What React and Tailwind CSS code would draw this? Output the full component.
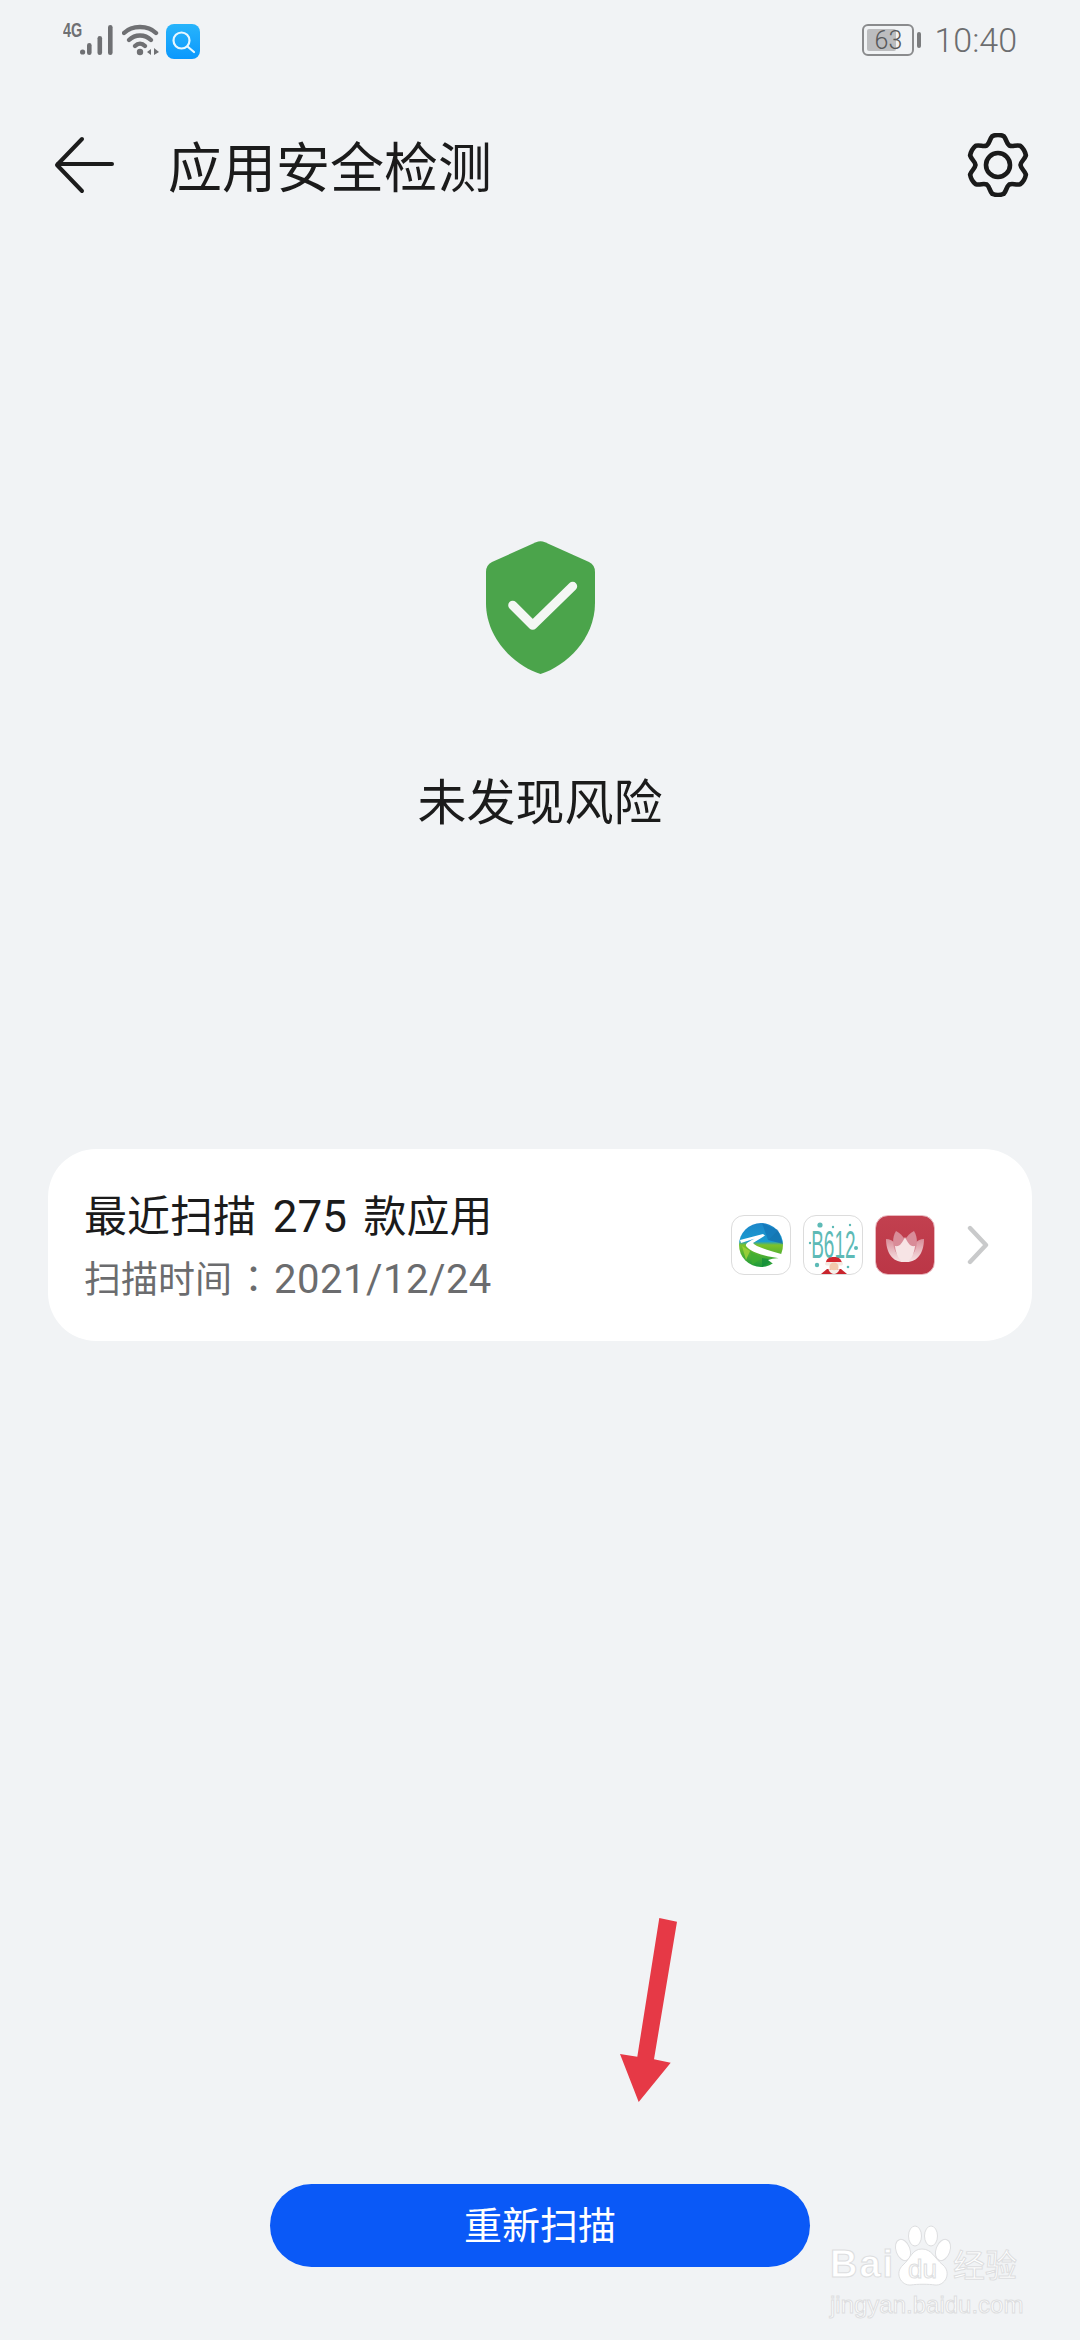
import React from 'react';

const FONT = 'font-["Roboto","Noto_Sans_CJK_SC",sans-serif]';

// gear outline: 6 teeth with smooth valleys
const gearPath = (() => {
  const R = 29.5;
  const r = 22.5;
  const pt = (rad, deg) => {
    const a = (deg * Math.PI) / 180;
    return `${(32 + rad * Math.cos(a)).toFixed(2)} ${(32 + rad * Math.sin(a)).toFixed(2)}`;
  };
  let d = '';
  for (let i = 0; i < 6; i++) {
    const a = -90 + i * 60;
    d += `${i === 0 ? 'M' : 'L'}${pt(R, a - 11)} Q${pt(R + 1.5, a)} ${pt(R, a + 11)} `;
    d += `C${pt(R - 3, a + 20)} ${pt(r + 1, a + 20)} ${pt(r, a + 30)} C${pt(r + 1, a + 40)} ${pt(R - 3, a + 40)} ${pt(R, a + 49)} `;
  }
  return d + 'Z';
})();

const SignalIcon = () => (
  <svg width="34" height="32" viewBox="0 0 34 32" className="shrink-0">
    <circle cx="2.6" cy="28" r="2.6" fill="#6f7073" />
    <rect x="7" y="19" width="4.6" height="12" rx="2.3" fill="#6f7073" />
    <rect x="17.5" y="12" width="4.6" height="19" rx="2.3" fill="#6f7073" />
    <rect x="28" y="1" width="4.6" height="30" rx="2.3" fill="#6f7073" />
  </svg>
);

const WifiIcon = () => (
  <svg width="38" height="32" viewBox="0 0 38 32" className="shrink-0">
    <g fill="none" stroke="#6f7073" strokeWidth="4.4" strokeLinecap="round">
      <path d="M2 9 C10 1 26 1 34 9" />
      <path d="M7 16 C13 10 23 10 29 16" />
      <path d="M13 22 C16 19 20 19 23 22" />
    </g>
    <circle cx="18" cy="28" r="3.2" fill="#6f7073" />
    <path d="M29 25 L25 28 L29 31 Z M32 24 L32 31 L37 28 Z" fill="#6f7073" />
  </svg>
);

const SearchAppIcon = () => (
  <div className="w-[34px] h-[35px] rounded-[8px] bg-gradient-to-b from-[#27b4fb] to-[#0a98fd] flex items-center justify-center shrink-0">
    <svg width="30" height="30" viewBox="0 0 30 30" fill="none" stroke="#e6f7ff" strokeWidth="2.2" strokeLinecap="round">
      <circle cx="13.5" cy="13.5" r="8" />
      <path d="M19.5 19.5 L26 25" />
    </svg>
  </div>
);

const RiverIcon = () => (
  <div className="w-[60px] h-[60px] rounded-[13px] bg-white border border-[#dcdcdc] overflow-hidden shrink-0">
    <svg width="58" height="58" viewBox="0 0 58 58">
      <defs>
        <linearGradient id="globeFill" x1="0" y1="0" x2="0" y2="1">
          <stop offset="0" stopColor="#1d86c9" />
          <stop offset="0.42" stopColor="#1a9cd0" />
          <stop offset="0.5" stopColor="#7cc22a" />
          <stop offset="1" stopColor="#1c9a3c" />
        </linearGradient>
      </defs>
      <circle cx="29" cy="29" r="22" fill="url(#globeFill)" />
      {/* low poly facets */}
      <path d="M30 7 L46 14 L36 24 Z" fill="#1273b5" opacity="0.7" />
      <path d="M36 24 L51 28 L46 14 Z" fill="#0f5f9e" opacity="0.55" />
      <path d="M18 35 L10 30 L14 44 Z" fill="#a5d33a" opacity="0.8" />
      <path d="M18 35 L30 42 L20 49 Z" fill="#3fae32" opacity="0.8" />
      <path d="M30 42 L42 44 L30 51 Z" fill="#0f8a3c" opacity="0.7" />
      {/* river */}
      <path d="M8 24 L31 18 L33 19.5 L21 27 C24 31 38 35 53 39 L53 43 C38 41 20 38 14 30 C13 27 20 24 23 22.5 L9 27 Z" fill="#fff" />
      <path d="M36 44 C42 42 48 42 54 42 L54 52 L44 50 Z" fill="#fff" />
    </svg>
  </div>
);

const B612Icon = () => (
  <div className="relative w-[60px] h-[60px] rounded-[13px] bg-white border border-[#dcdcdc] overflow-hidden shrink-0 flex items-center justify-center">
    <span className='font-["Liberation_Sans",sans-serif] text-[38px] leading-none text-[#5dbab6] scale-x-[0.5] whitespace-nowrap'>B612</span>
    <svg width="58" height="58" viewBox="0 0 58 58" className="absolute left-0 top-0">
      <g fill="#5dbab6">
        <circle cx="16" cy="9" r="2.6" />
        <circle cx="29" cy="11" r="1.2" />
        <circle cx="46" cy="9" r="1.2" />
        <circle cx="6" cy="27" r="1.2" />
        <circle cx="52" cy="32" r="2" />
        <circle cx="13" cy="49" r="2.2" />
        <circle cx="44" cy="51" r="1.3" />
      </g>
      <path d="M17 58 L23 53 L37 53 L43 58 Z" fill="#c9242c" />
      <path d="M22 47 C22 42 26 41 30 41 C35 41 37 43 38 47 Z" fill="#d2262e" />
      <rect x="21" y="46" width="18" height="3.4" rx="1.7" fill="#f4eae2" />
      <circle cx="30" cy="51" r="4.6" fill="#f3c9ac" />
      <path d="M24 52 C26 60 34 60 36 52 C33 55 27 55 24 52 Z" fill="#f6f0ea" />
    </svg>
  </div>
);

const LotusIcon = () => (
  <div className="w-[60px] h-[60px] rounded-[13px] bg-gradient-to-b from-[#c2404f] to-[#bb3646] border border-[#eab8bf] shrink-0">
    <svg width="58" height="58" viewBox="0 0 58 58">
      <defs>
        <linearGradient id="petalFill" x1="0" y1="0" x2="0" y2="1">
          <stop offset="0" stopColor="#d98c98" />
          <stop offset="1" stopColor="#f7e6e7" />
        </linearGradient>
      </defs>
      <path d="M10 23 C17 23 24 30 29 46 C17 47 10 37 10 23 Z" fill="url(#petalFill)" />
      <path d="M48 23 C41 23 34 30 29 46 C41 47 48 37 48 23 Z" fill="url(#petalFill)" />
      <path d="M20 15 C16 21 16 31 21 38 L29 40 L29 24 C27 20 24 17 20 15 Z" fill="#d98c98" />
      <path d="M38 15 C42 21 42 31 37 38 L29 40 L29 24 C31 20 34 17 38 15 Z" fill="#d98c98" />
      <path d="M29 21 C26 27 24 31 19 30 C20 39 24 46 29 46 C34 46 38 39 39 30 C34 31 32 27 29 21 Z" fill="#f7e4e5" />
    </svg>
  </div>
);

const App = () => {
  return (
    <div className={`relative w-[1080px] h-[2340px] bg-[#f1f3f5] overflow-hidden flex flex-col ${FONT}`}>
      {/* status bar */}
      <div className="h-[120px] pt-[24px] pl-[63px] pr-[63px] flex items-start justify-between shrink-0">
        <div className="flex items-start">
          <span className='w-[17px] -mt-[2px] text-[20px] leading-[17px] font-bold text-[#6f7073] scale-x-[0.72] origin-left whitespace-nowrap font-["Liberation_Sans",sans-serif]'>4G</span>
          <SignalIcon />
          <div className="ml-[8px] mr-[6px]"><WifiIcon /></div>
          <SearchAppIcon />
        </div>
        <div className="flex items-center">
          <div className="relative w-[52px] h-[32px] rounded-[6px] border-2 border-[#8a8b8d] flex items-center justify-center">
            <div className="absolute left-[3px] top-[3px] bottom-[3px] w-[29px] bg-[#bcbdbf] rounded-[2px]" />
            <span className="relative text-[25px] leading-none text-[#57585a] font-light">63</span>
          </div>
          <div className="w-[4px] h-[16px] ml-[3px] rounded-[2px] bg-[#7b7c7e]" />
          <span className="ml-[13px] text-[34px] leading-[32px] font-light text-[#6c6d6f]">10:40</span>
        </div>
      </div>

      {/* header */}
      <div className="h-[90px] pl-[53px] pr-[50px] flex items-center shrink-0">
        <svg width="62" height="58" viewBox="0 0 62 58" fill="none" stroke="#1c1c1c" strokeWidth="4" strokeLinecap="round" strokeLinejoin="round" className="shrink-0">
          <path d="M29 3 L4 29 L29 55" />
          <path d="M5 28 L59 28" />
        </svg>
        <span className="ml-[53px] mt-[10px] text-[54px] leading-[60px] text-[#1b1b1b]">应用安全检测</span>
        <svg width="64" height="64" viewBox="0 0 64 64" fill="none" stroke="#1a1a1a" strokeWidth="4.6" strokeLinejoin="round" className="ml-auto shrink-0">
          <path d={gearPath} />
          <circle cx="32" cy="32" r="12" />
        </svg>
      </div>

      {/* status shield */}
      <div className="mt-[331px] flex justify-center shrink-0">
        <svg width="109" height="133" viewBox="0 0 109 133" className="shrink-0">
          <path d="M50 1.2 Q54.5 -0.6 59 1.2 L103 21 Q109 24 109 31 L109 62 C109 98 80 125 54.5 133 C29 125 0 98 0 62 L0 31 Q0 24 6 21 Z" fill="#4ba44b" />
          <path d="M26.7 64.3 L46.7 84.3 L86.7 45.3" fill="none" stroke="#f4f7f4" strokeWidth="9" strokeLinecap="round" strokeLinejoin="round" />
        </svg>
      </div>
      <p className="mt-[100px] text-center text-[49px] leading-[60px] text-[#1b1b1b] shrink-0">未发现风险</p>

      {/* last scan card */}
      <div className="mt-[315px] mx-[48px] h-[192px] rounded-[48px] bg-white pl-[36px] pr-[43px] flex items-center shrink-0">
        <div className="flex flex-col pt-[8px]">
          <span className="text-[43px] leading-[60px] text-[#1b1b1b] whitespace-nowrap [word-spacing:6px]">最近扫描 <span className="text-[44px]">275</span> 款应用</span>
          <span className="text-[37px] leading-[60px] text-[#6b6c6e] whitespace-nowrap">
            扫描时间<span className='ml-[3px] font-["Noto_Sans_CJK_TC",sans-serif]'>：</span><span className="ml-[2px] text-[40px] tracking-[0.5px]">2021/12/24</span>
          </span>
        </div>
        <div className="ml-auto flex items-center gap-[12px]">
          <RiverIcon />
          <B612Icon />
          <LotusIcon />
          <svg width="22" height="40" viewBox="0 0 22 40" fill="none" stroke="#c9cacb" strokeWidth="4.4" strokeLinecap="round" strokeLinejoin="round" className="ml-[20px]">
            <path d="M3 3 L19 20 L3 37" />
          </svg>
        </div>
      </div>

      {/* rescan */}
      <button className="mt-auto mb-[73px] mx-auto w-[540px] h-[83px] rounded-full bg-[#0a59f7] text-white text-[38px] leading-none shrink-0">
        重新扫描
      </button>

      {/* red annotation arrow */}
      <svg width="70" height="190" viewBox="0 0 70 190" className="absolute left-[615px] top-[1915px]">
        <path d="M44.3 3 L62 6.7 L39 144.3 L55.7 147.7 L23.7 187 L5 139 L22.3 141.7 Z" fill="#e63946" />
      </svg>

      {/* baidu watermark */}
      <div className='absolute left-[830px] top-[2225px] w-[200px] font-["Liberation_Sans","Noto_Sans_CJK_SC",sans-serif] text-white [-webkit-text-stroke:1px_#dddee0]'>
        <div className="h-[62px] flex items-end whitespace-nowrap">
          <span className="w-[63px] text-[38px] leading-[46px] font-bold tracking-[2px]">Bai</span>
          <div className="relative w-[59px] h-[62px] flex items-end justify-center">
            <svg width="59" height="62" viewBox="0 0 59 62" className="absolute left-0 top-0" fill="#fff" stroke="#dddee0" strokeWidth="1">
              <ellipse cx="10" cy="25" rx="7" ry="11" transform="rotate(-20 10 25)" />
              <ellipse cx="22" cy="11" rx="6.5" ry="10" />
              <ellipse cx="38" cy="11" rx="6.5" ry="10" />
              <ellipse cx="50" cy="25" rx="7" ry="11" transform="rotate(20 50 25)" />
              <path d="M29 24 C39 24 41 33 50 40 C59 48 52 61 42 60 C36 59 24 59 18 60 C8 61 1 48 10 40 C18 33 19 24 29 24 Z" />
            </svg>
            <span className="relative text-[26px] leading-[36px]">du</span>
          </div>
          <span className="ml-[1px] text-[32px] leading-[42px]">经验</span>
        </div>
        <p className="mt-[6px] text-[24px] leading-[24px] whitespace-nowrap">jingyan.baidu.com</p>
      </div>
    </div>
  );
};

export default App;
